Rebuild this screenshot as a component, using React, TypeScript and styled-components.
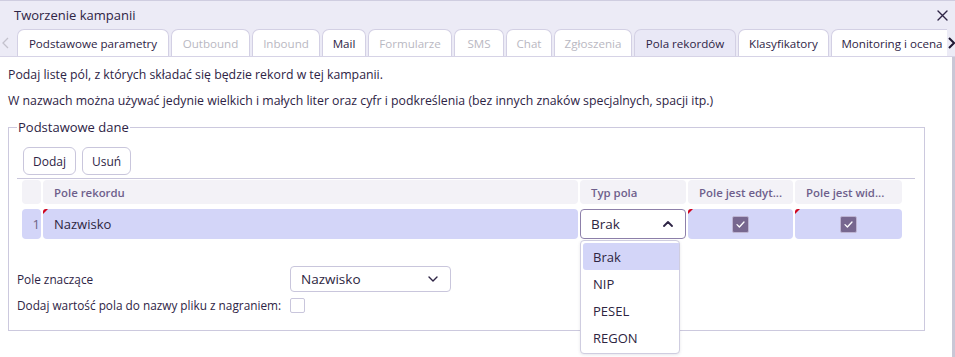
import React, { useState } from 'react';
import styled, { createGlobalStyle } from 'styled-components';

const FONT = '"Open Sans", "DejaVu Sans", sans-serif';

const GlobalStyle = createGlobalStyle`
  html, body {
    margin: 0;
    padding: 0;
    background: #ffffff;
  }
  body {
    font-family: ${FONT};
    color: #2e2445;
  }
  * {
    box-sizing: border-box;
  }
`;

const Window = styled.div`
  width: 955px;
  height: 357px;
  display: flex;
  flex-direction: column;
  overflow: hidden;
  background: #ffffff;
`;

const TitleBar = styled.div`
  height: 29px;
  display: flex;
  align-items: center;
  justify-content: space-between;
  padding: 0 4px 0 14px;
  background: #ecebf6;
  border-top: 1px solid #cfcde0;
`;

const Title = styled.span`
  font-size: 13px;
  color: #2e2445;
`;

const CloseButton = styled.button`
  width: 18px;
  height: 18px;
  padding: 0;
  border: none;
  background: transparent;
  display: flex;
  align-items: center;
  justify-content: center;
  color: #2e2445;
  cursor: pointer;
`;

const TabStrip = styled.div`
  height: 28px;
  display: flex;
  align-items: flex-end;
  background: #ecebf6;
  border-bottom: 1px solid #d6d3e6;
`;

const ScrollArrow = styled.button<{ $muted?: boolean }>`
  width: ${({ $muted }) => ($muted ? '17px' : '8px')};
  height: 27px;
  padding: 0;
  border: none;
  background: transparent;
  display: flex;
  align-items: center;
  justify-content: ${({ $muted }) => ($muted ? 'flex-start' : 'center')};
  padding-left: ${({ $muted }) => ($muted ? '2px' : '0')};
  color: ${({ $muted }) => ($muted ? '#c3c1cc' : '#1f1833')};
  flex-shrink: 0;
`;

const Tabs = styled.div`
  flex: 1;
  display: flex;
  gap: 2px;
  overflow: hidden;
  min-width: 0;
`;

const Tab = styled.button<{ $active?: boolean; $disabled?: boolean; $width: number }>`
  width: ${({ $width }) => $width}px;
  height: 27px;
  flex-shrink: 0;
  padding: 0;
  margin: 0;
  font-family: ${FONT};
  font-size: 11.6px;
  white-space: nowrap;
  text-align: center;
  border: 1px solid #d3d0e4;
  border-bottom: none;
  border-radius: 7px 7px 0 0;
  background: ${({ $active }) => ($active ? '#e9e8f6' : '#ffffff')};
  color: ${({ $disabled }) => ($disabled ? '#b9b8c2' : '#2e2445')};
  cursor: ${({ $disabled }) => ($disabled ? 'default' : 'pointer')};
`;

const Body = styled.div`
  flex: 1;
  display: flex;
  min-height: 0;
`;

const Main = styled.div`
  flex: 1;
  padding: 10px 0 0 8px;
`;

const Scrollbar = styled.div`
  width: 3px;
  background: #c9c7d6;
`;

const Hint = styled.p`
  margin: 0 0 10px 0;
  font-size: 12.3px;
  line-height: 16px;
  color: #2e2445;
`;

const Group = styled.fieldset`
  margin: 0 27px 0 0;
  padding: 12px 9px 17px 14px;
  border: 1px solid #ccc9de;
  min-width: 0;
`;

const Legend = styled.legend`
  padding: 0 1px;
  margin-left: -6px;
  font-size: 13px;
  line-height: 16px;
  color: #2e2445;
`;

const Toolbar = styled.div`
  display: flex;
  gap: 6px;
  margin-bottom: 3px;
`;

const Button = styled.button`
  height: 28px;
  padding: 0 9px;
  font-family: ${FONT};
  font-size: 12px;
  color: #2e2445;
  background: #ffffff;
  border: 1px solid #c9c6dc;
  border-radius: 6px;
  cursor: pointer;
`;

const Grid = styled.div`
  margin-left: -6px;
  padding: 1px 13px 0 5px;
  border-top: 1px solid #c9c6dc;
  display: flex;
  flex-direction: column;
  gap: 5px;
`;

const GridRow = styled.div`
  display: grid;
  grid-template-columns: 19px 535px 106px 105px 107px;
  gap: 2px;
`;

const HeaderCell = styled.div<{ $pad?: boolean }>`
  height: 24px;
  display: flex;
  align-items: center;
  padding-left: ${({ $pad }) => ($pad ? '11px' : '0')};
  background: #f3f2f7;
  border-radius: 4px;
  font-size: 11.4px;
  font-weight: 600;
  color: #6e5f8c;
  white-space: nowrap;
  overflow: hidden;
`;

const DataCell = styled.div<{ $center?: boolean; $dirty?: boolean }>`
  position: relative;
  height: 30px;
  display: flex;
  align-items: center;
  justify-content: ${({ $center }) => ($center ? 'center' : 'flex-start')};
  padding-left: ${({ $center }) => ($center ? '0' : '11px')};
  background: #d3d5f8;
  border-radius: 4px;
  font-size: 13px;
  color: #2d2541;

  &::before {
    content: '';
    display: ${({ $dirty }) => ($dirty ? 'block' : 'none')};
    position: absolute;
    top: 0;
    left: 0;
    border-style: solid;
    border-width: 5px 5px 0 0;
    border-color: #d0021b transparent transparent transparent;
    border-top-left-radius: 3px;
  }
`;

const RowNumber = styled.div`
  height: 30px;
  display: flex;
  align-items: center;
  justify-content: flex-end;
  padding-right: 1px;
  background: #d3d5f8;
  border-radius: 4px;
  font-size: 13px;
  color: #6e6585;
`;

const TypeCell = styled.div`
  position: relative;
`;

const SelectBox = styled.div<{ $open?: boolean; $width?: string; $height?: string }>`
  width: ${({ $width }) => $width || '100%'};
  height: ${({ $height }) => $height || '30px'};
  display: flex;
  align-items: center;
  justify-content: space-between;
  padding: 0 12px 0 10px;
  background: #ffffff;
  border: 1px solid ${({ $open }) => ($open ? '#8d80aa' : '#c9c6dc')};
  border-radius: 4px;
  font-size: 13.5px;
  color: #2d2541;
  cursor: pointer;
`;

const Dropdown = styled.ul`
  position: absolute;
  top: 31px;
  left: 0;
  width: 100px;
  margin: 0;
  padding: 2px 0 2px 2px;
  list-style: none;
  background: #ffffff;
  border: 1px solid #cfcde0;
  border-radius: 4px;
  box-shadow: 0 1px 3px rgba(60, 50, 90, 0.12);
  z-index: 5;
`;

const Option = styled.li<{ $selected?: boolean }>`
  height: 27px;
  display: flex;
  align-items: center;
  padding-left: 10px;
  font-size: 13px;
  color: #2d2541;
  background: ${({ $selected }) => ($selected ? '#d3d5f8' : 'transparent')};
  border-radius: 3px 0 0 3px;
  cursor: pointer;
`;

const CheckMark = styled.span<{ $checked?: boolean; $size?: number }>`
  width: ${({ $size }) => $size || 17}px;
  height: ${({ $size }) => $size || 17}px;
  display: inline-flex;
  align-items: center;
  justify-content: center;
  background: ${({ $checked }) => ($checked ? '#77678f' : '#ffffff')};
  border: 1px solid ${({ $checked }) => ($checked ? '#bdb4d2' : '#c9c6dc')};
  border-radius: 2px;
  cursor: pointer;
`;

const Form = styled.div`
  margin-top: 27px;
  display: grid;
  grid-template-columns: 267px auto;
  row-gap: 5px;
  align-items: center;
  justify-items: start;
`;

const Label = styled.span`
  font-size: 11.8px;
  color: #2e2445;
  margin-left: -6px;
`;

const Chevron: React.FC<{ up?: boolean }> = ({ up }) => (
  <svg width="10" height="6" viewBox="0 0 10 6" fill="none">
    <path
      d={up ? 'M1 5L5 1L9 5' : 'M1 1L5 5L9 1'}
      stroke="#2e2445"
      strokeWidth={up ? 1.8 : 1.4}
      strokeLinecap="round"
      strokeLinejoin="round"
    />
  </svg>
);

const Tick: React.FC = () => (
  <svg width="9" height="7" viewBox="0 0 9 7" fill="none">
    <path d="M1 3.6L3.4 6L8 1" stroke="#ffffff" strokeWidth="1.3" strokeLinecap="round" strokeLinejoin="round" />
  </svg>
);

const tabs = [
  { label: 'Podstawowe parametry', width: 152 },
  { label: 'Outbound', width: 79, disabled: true },
  { label: 'Inbound', width: 68, disabled: true },
  { label: 'Mail', width: 44 },
  { label: 'Formularze', width: 84, disabled: true },
  { label: 'SMS', width: 50, disabled: true },
  { label: 'Chat', width: 46, disabled: true },
  { label: 'Zgłoszenia', width: 78, disabled: true },
  { label: 'Pola rekordów', width: 102, active: true },
  { label: 'Klasyfikatory', width: 91 },
  { label: 'Monitoring i ocena', width: 122 },
];

const fieldTypes = ['Brak', 'NIP', 'PESEL', 'REGON'];

const App: React.FC = () => {
  const [fieldType, setFieldType] = useState('Brak');
  const [editable, setEditable] = useState(true);
  const [visible, setVisible] = useState(true);
  const [addToFile, setAddToFile] = useState(false);

  return (
    <>
      <GlobalStyle />
      <Window>
        <TitleBar>
          <Title>Tworzenie kampanii</Title>
          <CloseButton>
            <svg width="11" height="11" viewBox="0 0 11 11">
              <path d="M1 1L10 10M10 1L1 10" stroke="#2e2445" strokeWidth="1.4" strokeLinecap="round" />
            </svg>
          </CloseButton>
        </TitleBar>

        <TabStrip>
          <ScrollArrow $muted>
            <svg width="7" height="12" viewBox="0 0 7 12" fill="none">
              <path d="M6 1L1 6L6 11" stroke="currentColor" strokeWidth="1.3" />
            </svg>
          </ScrollArrow>
          <Tabs>
            {tabs.map((tab) => (
              <Tab key={tab.label} $width={tab.width} $active={tab.active} $disabled={tab.disabled}>
                {tab.label}
              </Tab>
            ))}
          </Tabs>
          <ScrollArrow>
            <svg width="7" height="12" viewBox="0 0 7 12" fill="none">
              <path d="M1 1L6 6L1 11" stroke="currentColor" strokeWidth="2" />
            </svg>
          </ScrollArrow>
        </TabStrip>

        <Body>
          <Main>
            <Hint>Podaj listę pól, z których składać się będzie rekord w tej kampanii.</Hint>
            <Hint>
              W nazwach można używać jedynie wielkich i małych liter oraz cyfr i podkreślenia (bez innych znaków
              specjalnych, spacji itp.)
            </Hint>

            <Group>
              <Legend>Podstawowe dane</Legend>
              <Toolbar>
                <Button>Dodaj</Button>
                <Button>Usuń</Button>
              </Toolbar>

              <Grid>
                <GridRow>
                  <HeaderCell />
                  <HeaderCell $pad>Pole rekordu</HeaderCell>
                  <HeaderCell $pad>Typ pola</HeaderCell>
                  <HeaderCell $pad>Pole jest edyt...</HeaderCell>
                  <HeaderCell $pad>Pole jest wid...</HeaderCell>
                </GridRow>
                <GridRow>
                  <RowNumber>1</RowNumber>
                  <DataCell $dirty>Nazwisko</DataCell>
                  <TypeCell>
                    <SelectBox $open>
                      {fieldType}
                      <Chevron up />
                    </SelectBox>
                    <Dropdown>
                      {fieldTypes.map((t) => (
                        <Option key={t} $selected={t === fieldType} onClick={() => setFieldType(t)}>
                          {t}
                        </Option>
                      ))}
                    </Dropdown>
                  </TypeCell>
                  <DataCell $center $dirty>
                    <CheckMark $checked={editable} onClick={() => setEditable(!editable)}>
                      {editable && <Tick />}
                    </CheckMark>
                  </DataCell>
                  <DataCell $center $dirty>
                    <CheckMark $checked={visible} onClick={() => setVisible(!visible)}>
                      {visible && <Tick />}
                    </CheckMark>
                  </DataCell>
                </GridRow>
              </Grid>

              <Form>
                <Label>Pole znaczące</Label>
                <SelectBox $width="161px" $height="26px">
                  Nazwisko
                  <Chevron />
                </SelectBox>
                <Label>Dodaj wartość pola do nazwy pliku z nagraniem:</Label>
                <CheckMark $size={15} $checked={addToFile} onClick={() => setAddToFile(!addToFile)}>
                  {addToFile && <Tick />}
                </CheckMark>
              </Form>
            </Group>
          </Main>
          <Scrollbar />
        </Body>
      </Window>
    </>
  );
};

export default App;
